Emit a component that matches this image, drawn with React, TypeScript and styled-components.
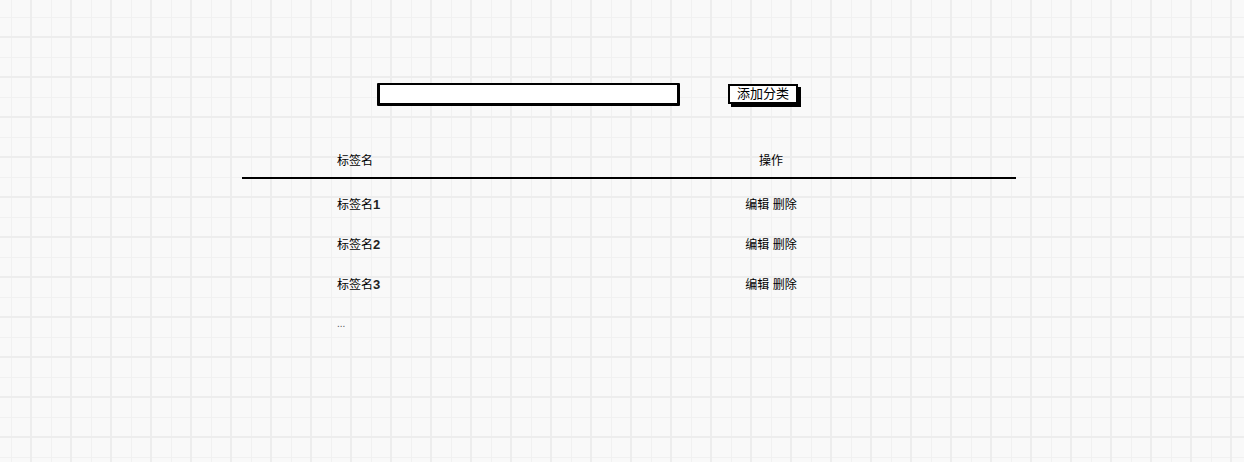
import styled, { createGlobalStyle } from "styled-components";

const GlobalStyle = createGlobalStyle`
  html, body {
    margin: 0;
    padding: 0;
  }
  body {
    font-family: "Liberation Sans", "Noto Sans CJK SC", sans-serif;
    color: #000;
  }
`

const rows = ["1", "2", "3"]

const App = () => {
  return (
    <Page>
      <GlobalStyle />
      <Container>
        <FormRow>
          <NameInput />
          <AddButton>添加分类</AddButton>
        </FormRow>
        <HeaderRow>
          <NameCell>标签名</NameCell>
          <ActionCell>操作</ActionCell>
        </HeaderRow>
        {rows.map((n) => (
          <Row key={n}>
            <NameCell>标签名<Num>{n}</Num></NameCell>
            <ActionCell>编辑 删除</ActionCell>
          </Row>
        ))}
        <Row>
          <NameCell><More>...</More></NameCell>
        </Row>
      </Container>
    </Page>
  );
}

const Page = styled.div`
  min-height: 462px;
  box-sizing: border-box;
  padding-top: 83px;
  background-color: #f9f9f9;
  background-image:
    linear-gradient(to right, transparent 30px, #ededed 30px, #ededed 32px, transparent 32px),
    linear-gradient(to bottom, transparent 36px, #ededed 36px, #ededed 38px, transparent 38px),
    linear-gradient(to right, transparent 11px, #f1f1f1 11px, #f1f1f1 12px, transparent 12px),
    linear-gradient(to bottom, transparent 17px, #f1f1f1 17px, #f1f1f1 18px, transparent 18px);
  background-size: 40px 40px;
`
const Container = styled.div`
  width: 774px;
  margin-left: 242px;
`
const FormRow = styled.div`
  display: flex;
  align-items: flex-start;
  gap: 48px;
  padding-left: 135px;
  height: 24px;
`
const NameInput = styled.div`
  width: 297px;
  height: 18px;
  background: #fff;
  border: 3px solid #000;
  border-top-width: 2px;
  border-radius: 1px;
`
const AddButton = styled.div`
  box-sizing: border-box;
  width: 70px;
  height: 20px;
  margin-top: 1px;
  background: #fff;
  border: 2px solid #000;
  box-shadow: 3px 3px 0 #000;
  font-size: 13px;
  line-height: 16px;
  text-align: center;
`
const Grid = styled.div`
  display: grid;
  grid-template-columns: 419px 220px 1fr;
  align-items: center;
  font-size: 12px;
`
const HeaderRow = styled(Grid)`
  height: 36px;
  margin-top: 34px;
  border-bottom: 2px solid #000;
  margin-bottom: 4px;
`
const Row = styled(Grid)`
  height: 40px;
`
const NameCell = styled.div`
  padding-left: 95px;
`
const Num = styled.span`
  font-weight: bold;
  font-size: 13px;
  color: #222;
`
const ActionCell = styled.div`
  text-align: center;
`
const More = styled.span`
  font-size: 10px;
  color: #555;
`

export default App;
